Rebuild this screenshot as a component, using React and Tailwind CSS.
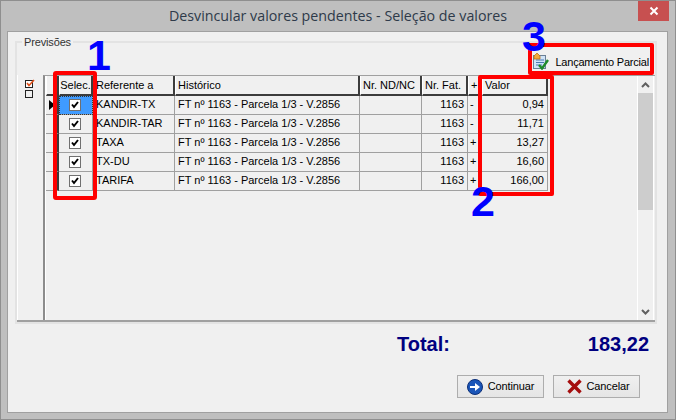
const columns = 'grid-cols-[13px_34px_82px_185px_62px_46px_14px_66px]';

const rows = [
  { ref: 'KANDIR-TX', sign: '-', valor: '0,94' },
  { ref: 'KANDIR-TAR', sign: '-', valor: '11,71' },
  { ref: 'TAXA', sign: '+', valor: '13,27' },
  { ref: 'TX-DU', sign: '+', valor: '16,60' },
  { ref: 'TARIFA', sign: '+', valor: '166,00' },
];

function HeaderCell({ children, center }) {
  return (
    <div className={`h-[20px] overflow-hidden whitespace-nowrap border-l border-l-white border-r-2 border-r-[#3c3c3c] border-b-2 border-b-[#3c3c3c] leading-[18px] ${center ? 'text-center' : 'pl-[2px]'}`}>
      {children}
    </div>
  );
}

function Cell({ children, right, className = '' }) {
  return (
    <div className={`h-[19px] overflow-hidden whitespace-nowrap border-r border-b border-[#a0a0a0] leading-[17px] ${right ? 'pr-[3px] text-right' : 'pl-[3px]'} ${className}`}>
      {children}
    </div>
  );
}

function CheckBox() {
  return (
    <svg width="12" height="12" viewBox="0 0 12 12" className="block">
      <rect x="0.5" y="0.5" width="11" height="11" fill="#fff" stroke="#707070" />
      <path d="M3 5.5 L5 8 L9 3" fill="none" stroke="#000" strokeWidth="2" />
    </svg>
  );
}

function PartialIcon() {
  return (
    <svg width="16" height="17" viewBox="0 0 16 17" className="block">
      <rect x="0.5" y="2.5" width="12" height="13" fill="#cfe3f7" stroke="#6b7f95" />
      <path d="M3 7h8M3 9.5h8M3 12h6" stroke="#4a78b0" />
      <path d="M1 3 L4 0 L7 3 L7 6 L1 6Z" fill="#f2a93b" stroke="#b9711a" strokeWidth="0.8" />
      <path d="M6 12 L9 15.5 L15 7" fill="none" stroke="#1f8a2a" strokeWidth="2.4" />
    </svg>
  );
}

function ArrowIcon() {
  return (
    <svg width="16" height="16" viewBox="0 0 16 16" className="block">
      <circle cx="8" cy="8" r="7.5" fill="#1a55b8" stroke="#0c2f78" />
      <path d="M3 7h5V4l5 4-5 4V9H3Z" fill="#fff" />
    </svg>
  );
}

function CrossIcon() {
  return (
    <svg width="15" height="15" viewBox="0 0 15 15" className="block">
      <path d="M1.5 1.5 L13.5 13.5 M13.5 1.5 L1.5 13.5" stroke="#a50f0f" strokeWidth="3.4" />
    </svg>
  );
}

function Chevron({ up }) {
  return (
    <svg width="9" height="6" viewBox="0 0 9 6" className="block">
      <path d={up ? 'M1 5 L4.5 1.5 L8 5' : 'M1 1 L4.5 4.5 L8 1'} fill="none" stroke="#606060" strokeWidth="2" />
    </svg>
  );
}

function Button({ icon, label, className = '' }) {
  return (
    <div className={`flex h-[23px] w-[87px] items-center justify-center gap-[5px] border border-[#adadad] bg-gradient-to-b from-[#f0f0f0] to-[#e5e5e5] tracking-[-0.15px] ${className}`}>
      {icon}
      <span>{label}</span>
    </div>
  );
}

export default function App() {
  return (
    <div className="relative flex h-[420px] w-[676px] flex-col border border-[#8f8f8f] bg-[#bfbfbf] font-['Liberation_Sans',sans-serif] text-[11px] text-black">
      <div className="flex h-[30px] shrink-0 items-start">
        <div className="flex-1 pl-[37px] pt-[5px] text-center font-['Open_Sans',sans-serif] text-[14.25px] leading-[20px] text-[#2e3a4a]">
          Desvincular valores pendentes - Seleção de valores
        </div>
        <div className="mr-[6px] flex h-[20px] w-[31px] items-center justify-center bg-[#c75050]">
          <svg width="10" height="10" viewBox="0 0 10 10">
            <path d="M1.5 1.5 L8.5 8.5 M8.5 1.5 L1.5 8.5" stroke="#fff" strokeWidth="2" />
          </svg>
        </div>
      </div>

      <div className="ml-[6px] mr-[7px] flex h-[382px] flex-col border border-[#a0a0a0] bg-[#f0f0f0] pl-[7px] pr-[10px] pt-[9px]">
        <div className="relative flex h-[283px] flex-col border-2 border-[#e3e3e3]">
          <span className="absolute left-[5px] top-[-8px] bg-[#f0f0f0] px-[2px] leading-[14px] tracking-[-0.15px] text-[#333]">Previsões</span>
          <div className="flex h-[32px] shrink-0 items-center justify-end gap-[6px] pr-[6px] pt-[5px] tracking-[-0.2px]">
            <PartialIcon />
            <span className="leading-[14px]">Lançamento Parcial</span>
          </div>
          <div className="flex min-h-0 flex-1 border-b-2 border-b-[#a0a0a0]">
            <div className="flex w-[26px] shrink-0 flex-col items-start gap-[2px] border-l border-white pl-[7px] pt-[4px]">
              <svg width="10" height="9" viewBox="0 0 10 9" className="block">
                <rect x="0.5" y="1.5" width="7" height="7" fill="#fff" stroke="#222" />
                <path d="M2 4 L4 6.5 L9 1" fill="none" stroke="#e0501a" strokeWidth="1.6" />
              </svg>
              <div className="h-[8px] w-[8px] border border-[#222] bg-[#f0f0f0]" />
            </div>
            <div className="flex min-w-0 flex-1 border-t border-l-2 border-t-[#a0a0a0] border-l-[#8c8c8c]">
              <div className={`grid flex-1 content-start border-l border-white ${columns}`}>
                <HeaderCell />
                <HeaderCell center>Selec.</HeaderCell>
                <HeaderCell>Referente a</HeaderCell>
                <HeaderCell>Histórico</HeaderCell>
                <HeaderCell>Nr. ND/NC</HeaderCell>
                <HeaderCell>Nr. Fat.</HeaderCell>
                <HeaderCell>+</HeaderCell>
                <HeaderCell>Valor</HeaderCell>
                {rows.map((row, i) => (
                  <div key={row.ref} className="contents">
                    <Cell className="flex items-center border-r-2 border-r-[#3c3c3c] !pl-[3px]">
                      {i === 0 && <div className="h-0 w-0 border-y-[5px] border-l-[6px] border-y-transparent border-l-black" />}
                    </Cell>
                    <Cell className={`flex items-center justify-center !pl-0 pr-[1px] ${i === 0 ? 'bg-[#3f9bff] outline-1 -outline-offset-1 outline-dotted outline-[#333]' : ''}`}>
                      <CheckBox />
                    </Cell>
                    <Cell>{row.ref}</Cell>
                    <Cell>FT nº 1163 - Parcela 1/3 - V.2856</Cell>
                    <Cell />
                    <Cell right>1163</Cell>
                    <Cell className="!pl-[2px]">{row.sign}</Cell>
                    <Cell right>{row.valor}</Cell>
                  </div>
                ))}
              </div>
              <div className="mr-[1px] flex w-[17px] shrink-0 flex-col border-x border-white">
                <div className="flex h-[17px] items-center justify-center">
                  <Chevron up />
                </div>
                <div className="h-[117px] bg-[#cdcdcd]" />
                <div className="flex-1" />
                <div className="flex h-[17px] items-center justify-center">
                  <Chevron />
                </div>
              </div>
            </div>
          </div>
        </div>

        <div className="flex h-[39px] shrink-0 items-center justify-between pl-[382px] pr-[8px] text-[20px] font-bold text-[#000080]">
          <span>Total:</span>
          <span>183,22</span>
        </div>

        <div className="mt-[12px] flex justify-end gap-[9px] pr-[17px]">
          <Button icon={<ArrowIcon />} label="Continuar" />
          <Button icon={<CrossIcon />} label="Cancelar" className="pl-[3px]" />
        </div>
      </div>

      {/* red marks and numbers drawn over the dialog */}
      <div className="absolute left-[52px] top-[70px] h-[129px] w-[44px] rounded-[3px] border-4 border-[#ff0000]" />
      <div className="absolute left-[477px] top-[74px] h-[121px] w-[76px] rounded-[2px] border-4 border-[#ff0000]" />
      <div className="absolute left-[527px] top-[42px] h-[32px] w-[126px] rounded-[2px] border-4 border-[#ff0000]" />
      <span className="absolute left-[86px] top-[30px] text-[43px] font-bold leading-[48px] text-[#0000ff]">1</span>
      <span className="absolute left-[470px] top-[176px] text-[43px] font-bold leading-[48px] text-[#0000ff]">2</span>
      <span className="absolute left-[521px] top-[11px] text-[43px] font-bold leading-[48px] text-[#0000ff]">3</span>
    </div>
  );
}
